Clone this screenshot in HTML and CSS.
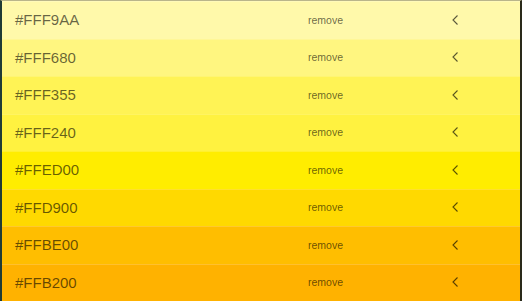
FILE: index.html
```html
<!DOCTYPE html>
<html>
<head>
    <title>Palette</title>
    <link rel="stylesheet" href="styles.css">
</head>
<body>
    <div class="list">
        <div class="row" style="background-color: #FFF9AA;">
            <span class="hex">#FFF9AA</span>
            <span class="remove">remove</span>
            <span class="chev"><svg width="8" height="12" viewBox="0 0 8 12"><path d="M6.5 1.5 L2 6 L6.5 10.5" fill="none" stroke="currentColor" stroke-width="1.1"/></svg></span>
        </div>
        <div class="row" style="background-color: #FFF680;">
            <span class="hex">#FFF680</span>
            <span class="remove">remove</span>
            <span class="chev"><svg width="8" height="12" viewBox="0 0 8 12"><path d="M6.5 1.5 L2 6 L6.5 10.5" fill="none" stroke="currentColor" stroke-width="1.1"/></svg></span>
        </div>
        <div class="row" style="background-color: #FFF355;">
            <span class="hex">#FFF355</span>
            <span class="remove">remove</span>
            <span class="chev"><svg width="8" height="12" viewBox="0 0 8 12"><path d="M6.5 1.5 L2 6 L6.5 10.5" fill="none" stroke="currentColor" stroke-width="1.1"/></svg></span>
        </div>
        <div class="row" style="background-color: #FFF240;">
            <span class="hex">#FFF240</span>
            <span class="remove">remove</span>
            <span class="chev"><svg width="8" height="12" viewBox="0 0 8 12"><path d="M6.5 1.5 L2 6 L6.5 10.5" fill="none" stroke="currentColor" stroke-width="1.1"/></svg></span>
        </div>
        <div class="row" style="background-color: #FFED00;">
            <span class="hex">#FFED00</span>
            <span class="remove">remove</span>
            <span class="chev"><svg width="8" height="12" viewBox="0 0 8 12"><path d="M6.5 1.5 L2 6 L6.5 10.5" fill="none" stroke="currentColor" stroke-width="1.1"/></svg></span>
        </div>
        <div class="row" style="background-color: #FFD900;">
            <span class="hex">#FFD900</span>
            <span class="remove">remove</span>
            <span class="chev"><svg width="8" height="12" viewBox="0 0 8 12"><path d="M6.5 1.5 L2 6 L6.5 10.5" fill="none" stroke="currentColor" stroke-width="1.1"/></svg></span>
        </div>
        <div class="row" style="background-color: #FFBE00;">
            <span class="hex">#FFBE00</span>
            <span class="remove">remove</span>
            <span class="chev"><svg width="8" height="12" viewBox="0 0 8 12"><path d="M6.5 1.5 L2 6 L6.5 10.5" fill="none" stroke="currentColor" stroke-width="1.1"/></svg></span>
        </div>
        <div class="row" style="background-color: #FFB200;">
            <span class="hex">#FFB200</span>
            <span class="remove">remove</span>
            <span class="chev"><svg width="8" height="12" viewBox="0 0 8 12"><path d="M6.5 1.5 L2 6 L6.5 10.5" fill="none" stroke="currentColor" stroke-width="1.1"/></svg></span>
        </div>
    </div>
</body>
</html>
```

FILE: styles.css
```css
html, body {
    margin: 0;
    padding: 0;
    height: 100%;
}
body {
    font-family: "Liberation Sans", Arial, sans-serif;
    background-color: #2a2a2a;
}
.list {
    display: flex;
    flex-direction: column;
    height: 301px;
    box-sizing: border-box;
    border-left: 2px solid #1f3b36;
    border-right: 2px solid #2a2a1a;
    border-top: 1px solid #b9b58a;
}
.row {
    flex: 1;
    display: flex;
    align-items: center;
    box-shadow: inset 0 1px 0 rgba(255,255,255,0.18);
}
.hex {
    width: 293px;
    padding-left: 13px;
    font-size: 15px;
    color: rgba(0,0,0,0.6);
}
.remove {
    width: 143px;
    font-size: 10.5px;
    color: rgba(0,0,0,0.6);
}
.chev {
    display: flex;
    color: rgba(0,0,0,0.65);
}
```
